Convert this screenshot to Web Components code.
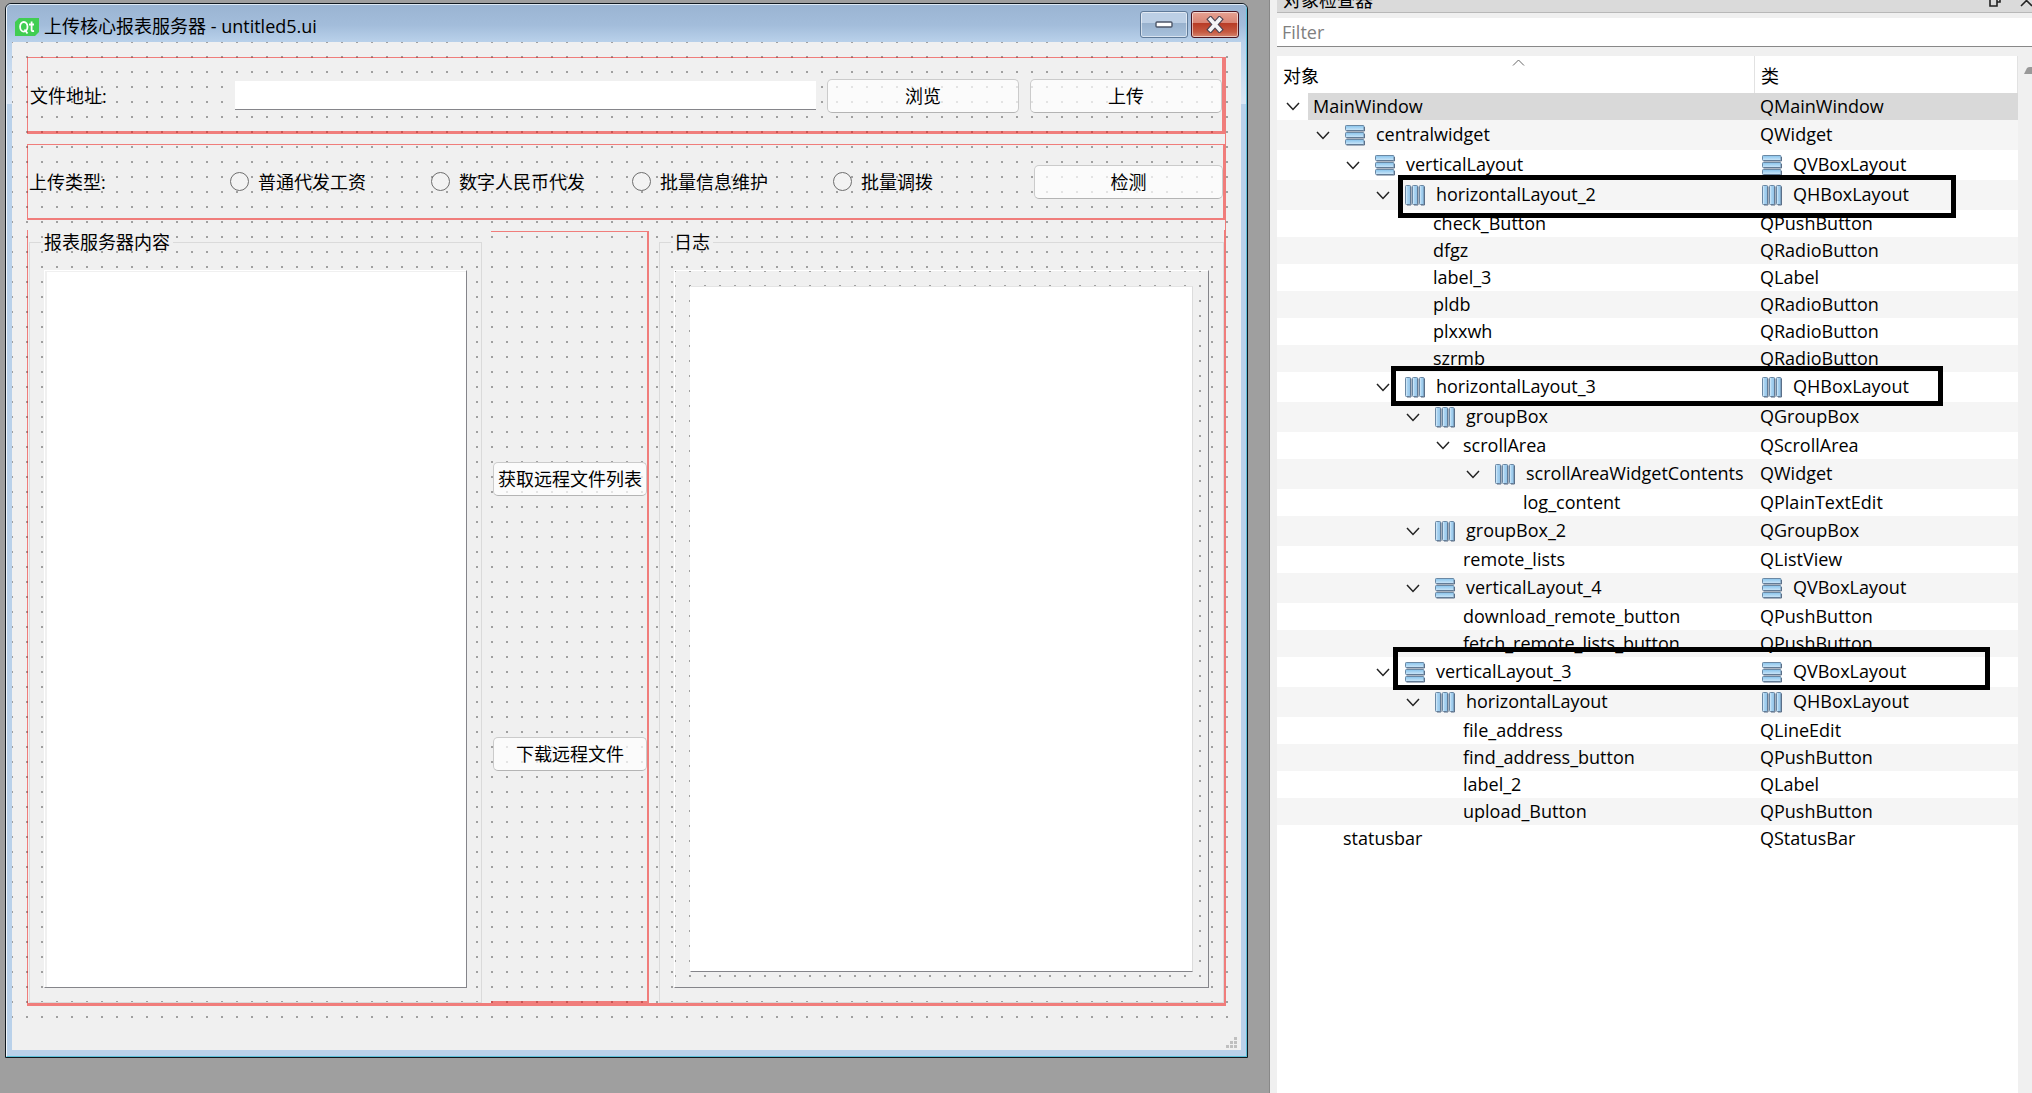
<!DOCTYPE html>
<html lang="zh-CN">
<head>
<meta charset="utf-8">
<title>Qt Designer</title>
<style>
html, body { margin: 0; height: 100%; }
body {
  font-family: "Open Sans", "Noto Sans CJK SC", sans-serif;
  font-size: 18px; line-height: 24px; color: #000;
  --red: rgba(240, 10, 5, .5);
  background: #9f9f9f; overflow: hidden;
}
</style>
</head>
<body>
<designer-app></designer-app>
<script>
const define = (name, html, setup) => {
  const tpl = document.createElement('template');
  tpl.innerHTML = html;
  customElements.define(name, class extends HTMLElement {
    constructor() {
      super();
      this.attachShadow({ mode: 'open' }).append(tpl.content.cloneNode(true));
    }
    connectedCallback() { if (setup) setup(this, this.shadowRoot); }
  });
};

define('qt-button', `
<style>
:host { display: block; min-width: 0; }
button { box-sizing: border-box; width: 100%; height: 34px; padding: 0; font: inherit; color: inherit; white-space: nowrap;
  border: 1px solid #cbcbcb; border-bottom-color: #b4b4b4; border-radius: 5px; background: rgba(255,255,255,.7); }
</style>
<button type="button"><slot></slot></button>`);

define('qt-radio', `
<style>
:host { display: block; }
label { display: flex; align-items: center; gap: 9px; white-space: nowrap; }
input { appearance: none; flex: none; box-sizing: border-box; width: 19px; height: 19px; margin: 0;
  border: 1px solid #6e6e6e; border-radius: 50%; background: #f3f3f3; }
input:checked { border: 6px solid #0067c0; background: #fff; }
</style>
<label><input type="radio" name="kind"><span><slot></slot></span></label>`);

define('group-box', `
<style>
:host { display: flex; min-width: 0; }
fieldset { flex: 1; min-width: 0; box-sizing: border-box; height: 100%; margin: 0; padding: 16px 14px 14px; border: 1px solid #dadada; }
legend { margin-left: -3px; padding: 0 3px; height: 24px; }
</style>
<fieldset><legend></legend><slot></slot></fieldset>`,
(host, root) => { root.querySelector('legend').textContent = host.getAttribute('heading'); });

define('list-view', `
<style>
:host { display: block; box-sizing: border-box; height: 100%; background: #fff; border: 1px solid;
  border-color: #fff #85858a #85858a #fff; box-shadow: inset 2px 1px 0 #f0f0f0; }
</style><slot></slot>`);

define('scroll-area', `
<style>
:host { display: block; box-sizing: border-box; height: 100%; padding: 15px; border: 1px solid;
  border-color: #fff #85858a #85858a #fff;
  background: conic-gradient(from 0deg at 2px 2px, transparent 0 270deg, #a0a0a0 0) -1px -1px / 15px 15px #f0f0f0; }
textarea { display: block; box-sizing: border-box; width: 100%; height: 100%; margin: 0; padding: 4px; resize: none; font: inherit;
  outline: 0; background: #fff; border: 1px solid; border-color: #e4e4e4 #dcdcdc #85858a #fff; border-radius: 0; }
</style>
<textarea aria-label="log_content"></textarea>`);

define('title-bar', `
<style>
:host { display: flex; align-items: center; height: 37px; padding: 0 7px 0 8px; box-sizing: border-box;
  background: linear-gradient(#9ab4d2, #a3bddb 55%, #b9d1ea); }
svg { display: block; }
.logo { flex: none; margin: 7px 5px 0 0; }
h1 { flex: 1; margin: 0; padding-top: 4px; font-weight: 400; font-size: 18px; line-height: 24px; white-space: nowrap; }
button { flex: none; width: 48px; height: 27px; margin: 2px 0 0 3px; padding: 0; display: grid; place-items: center;
  border: 1px solid #5f7a99; border-radius: 3px; box-shadow: inset 0 0 0 1px rgba(255,255,255,.55);
  background: linear-gradient(#bccfe5 0 45%, #98b1cd 45%, #a9c2dd); }
.close { border-color: #4a1420; background: linear-gradient(#e6a293, #d98473 45%, #b83b25 45%, #c65a42 80%, #d58570); }
</style>
<svg class="logo" width="24" height="18" viewBox="0 0 24 18" aria-hidden="true"><path d="M4 0H24V14L20 18H0V4Z" fill="#41cd52"/><g fill="none" stroke="#fff" stroke-width="1.8"><ellipse cx="8.8" cy="8.8" rx="3.7" ry="4.8"/><path d="M9.5 11.5L12.5 15.5M16.6 3.5V12Q16.6 13.5 19 13M14 6.5H19"/></g></svg>
<h1><slot></slot></h1>
<button type="button" aria-label="最小化"><svg width="18" height="7"><rect x="1" y="1" width="16" height="5" rx="1" fill="#fff" stroke="#4c5668" stroke-width="1.4"/></svg></button>
<button type="button" class="close" aria-label="关闭"><svg width="18" height="17" viewBox="0 0 18 17"><path d="M4.500 3.500L13.500 13.500M13.500 3.500L4.500 13.500" stroke="#4a4452" stroke-width="6" stroke-linecap="square"/><path d="M4.500 3.500L13.500 13.500M13.500 3.500L4.500 13.500" stroke="#f4f4f6" stroke-width="3.800" stroke-linecap="square"/></svg></button>`);

define('form-canvas', `
<style>
:host { flex: 1; min-height: 0; display: flex; padding: 15px 15px 14px;
  background: conic-gradient(from 0deg at 2px 2px, transparent 0 270deg, #a0a0a0 0) -1px -1px / 15px 15px #f0f0f0; }
main { flex: 1; min-width: 0; display: flex; flex-direction: column; gap: 10px; border-right: 1px solid var(--red); }
section { box-sizing: border-box; border: 1px solid var(--red); display: grid; align-items: center; }
.file { height: 77px; grid-template-columns: 194fr 581fr 192fr 192fr; column-gap: 11px; border-width: 1px 3px 3px 1px; padding: 2px 0 0 2px; }
.kind { height: 76px; grid-template-columns: repeat(5, 1fr) 189px; border-width: 1px 2px 2px 1px; padding-left: 1px; }
.work { flex: 1; min-height: 0; grid-template-columns: 462fr 158px 575fr; grid-template-rows: 100%; align-items: stretch; border-width: 0 1px 3px 1px; padding-left: 1px; }
.file input { box-sizing: border-box; width: 100%; height: 29px; margin: 0; padding: 0 4px; font: inherit; border: 0; border-bottom: 1px solid #85858a; background: #fff; outline: 0; }
.tools { box-sizing: border-box; margin-top: 1px; padding-left: 2px; display: flex; flex-direction: column; justify-content: center; gap: 241px;
  border: solid var(--red); border-width: 1px 2px 2px 0; }
.left { margin-right: 9px; } .right { margin-left: 10px; }
</style>
<main>
  <section class="file">
    <label for="path">文件地址:</label><input id="path" type="text">
    <qt-button>浏览</qt-button><qt-button>上传</qt-button>
  </section>
  <section class="kind">
    <span>上传类型:</span>
    <qt-radio>普通代发工资</qt-radio><qt-radio>数字人民币代发</qt-radio><qt-radio>批量信息维护</qt-radio><qt-radio>批量调拨</qt-radio>
    <qt-button>检测</qt-button>
  </section>
  <section class="work">
    <group-box class="left" heading="报表服务器内容"><list-view></list-view></group-box>
    <div class="tools"><qt-button>获取远程文件列表</qt-button><qt-button>下载远程文件</qt-button></div>
    <group-box class="right" heading="日志"><scroll-area></scroll-area></group-box>
  </section>
</main>`);

define('designer-window', `
<style>
:host { display: flex; flex-direction: column; box-sizing: border-box; border: 1px solid #10181f; border-radius: 6px 6px 0 0; background: #b9d1ea; overflow: hidden; }
.frame { flex: 1; min-height: 0; display: flex; flex-direction: column; border: 1px solid; border-color: #dfeaf5 #5cc0d8 #5cc0d8 #f2f7fc; border-radius: 5px 5px 0 0; overflow: hidden;
  background: linear-gradient(#b9d1ea 37px, #dbe7f5 99px, #b9d1ea 99px); }
.client { flex: 1; min-height: 0; display: flex; flex-direction: column; margin: 0 5px 6px; }
footer { height: 30px; background: #f0f0f0; display: flex; align-items: flex-end; justify-content: flex-end; }
footer svg { margin: 0 4px 2px 0; }
title-bar { flex: none; }
</style>
<div class="frame">
  <title-bar><slot name="title"></slot></title-bar>
  <div class="client">
    <form-canvas></form-canvas>
    <footer><svg width="11" height="11" fill="#bfbfbf" aria-hidden="true"><path d="M8 0h3v3H8zM4 4h3v3H4zM8 4h3v3H8zM0 8h3v3H0zM4 8h3v3H4zM8 8h3v3H8z"/></svg></footer>
  </div>
</div>`);

define('layout-icon', `
<style>:host { display: block; flex: none; width: 20px; height: 21px; } :host([kind="h"]) .v, :host([kind="v"]) .h { display: none; } svg { display: block; }</style>
<svg width="20" height="21" viewBox="0 0 20 21" aria-hidden="true">
  <defs><linearGradient id="g" x2="1"><stop offset="0" stop-color="#eaf5fd"/><stop offset=".4" stop-color="#a9d3f1"/><stop offset="1" stop-color="#8fc1e6"/></linearGradient>
  <linearGradient id="k" x2="0" y2="1"><stop offset="0" stop-color="#86c3ec"/><stop offset="1" stop-color="#cfe7f8"/></linearGradient></defs>
  <g class="v" stroke="#6a88a4" fill="url(#k)"><rect x=".5" y=".5" width="18.500" height="5" rx=".8"/><rect x=".5" y="7.500" width="18.500" height="5" rx=".8"/><rect x=".5" y="14.500" width="18.500" height="5" rx=".8"/><path d="M1.500 6H19.500V2M1.500 13H19.500V9M1.500 20H19.500V16" fill="none" stroke="#5b6f88"/></g>
  <g class="h" stroke="#6a88a4" fill="url(#g)"><rect x=".5" y=".5" width="5" height="19" rx=".8"/><rect x="7.500" y=".5" width="5" height="19" rx=".8"/><rect x="14.500" y=".5" width="4.500" height="19" rx=".8"/><path d="M6 1.500V20H2M13 1.500V20H9M19.500 1.500V20H16" fill="none" stroke="#5b6f88"/></g>
</svg>`);

const rows = [
  [0, 'MainWindow', 'QMainWindow', 1], [1, 'centralwidget', 'QWidget', 1, 'v'], [2, 'verticalLayout', 'QVBoxLayout', 1, 'v', 'v'],
  [3, 'horizontalLayout_2', 'QHBoxLayout', 1, 'h', 'h'], [4, 'check_Button', 'QPushButton'], [4, 'dfgz', 'QRadioButton'],
  [4, 'label_3', 'QLabel'], [4, 'pldb', 'QRadioButton'], [4, 'plxxwh', 'QRadioButton'], [4, 'szrmb', 'QRadioButton'],
  [3, 'horizontalLayout_3', 'QHBoxLayout', 1, 'h', 'h'], [4, 'groupBox', 'QGroupBox', 1, 'h'], [5, 'scrollArea', 'QScrollArea', 1],
  [6, 'scrollAreaWidgetContents', 'QWidget', 1, 'h'], [7, 'log_content', 'QPlainTextEdit'], [4, 'groupBox_2', 'QGroupBox', 1, 'h'],
  [5, 'remote_lists', 'QListView'], [4, 'verticalLayout_4', 'QVBoxLayout', 1, 'v', 'v'], [5, 'download_remote_button', 'QPushButton'],
  [5, 'fetch_remote_lists_button', 'QPushButton'], [3, 'verticalLayout_3', 'QVBoxLayout', 1, 'v', 'v'],
  [4, 'horizontalLayout', 'QHBoxLayout', 1, 'h', 'h'], [5, 'file_address', 'QLineEdit'], [5, 'find_address_button', 'QPushButton'],
  [5, 'label_2', 'QLabel'], [5, 'upload_Button', 'QPushButton'], [1, 'statusbar', 'QStatusBar']
];

define('object-tree', `
<style>
:host { display: block; position: relative; flex: 1; min-width: 0; background: #fff; }
table { width: 100%; border-collapse: collapse; table-layout: fixed; }
th, td { padding: 0; text-align: left; font-weight: 400; }
th { height: 37px; vertical-align: top; }
th div { box-sizing: border-box; height: 37px; padding: 8px 0 0 6px; border-right: 1px solid #e2e2e2; }
th svg { display: block; margin: -5px auto -2px; }
col.name { width: 478px; }
tbody tr { height: 27px; } tbody tr.tall { height: 30px; }
tbody tr:nth-child(even) { background: #f5f5f5; }
td > div { display: flex; align-items: stretch; height: 27px; line-height: 24px; } .tall td > div { height: 30px; }
.pad { flex: none; width: calc(var(--d) * 30px); }
button { flex: none; width: 31px; padding: 0; border: 0; background: none; display: grid; place-items: center; }
i { flex: none; width: 31px; }
.cell { flex: 1; display: flex; align-items: center; padding-left: 5px; white-space: nowrap; }
.cell span { padding-bottom: 2px; }
.cell.icon { padding-left: 7px; gap: 11px; }
.sel .cell { background: #d9d9d9; }
.mark { position: absolute; box-sizing: border-box; border: 5px solid #000; pointer-events: none; }
</style>
<table>
  <colgroup><col class="name"><col></colgroup>
  <thead><tr><th scope="col"><div class="sort">对象</div></th><th scope="col"><div>类</div></th></tr></thead>
  <tbody></tbody>
</table>
<div class="mark" style="left:121px;top:119px;width:558px;height:43px"></div>
<div class="mark" style="left:114px;top:310px;width:552px;height:40px"></div>
<div class="mark" style="left:116px;top:591px;width:597px;height:43px"></div>`,
(host, root) => {
  const cell = (text, icon) => `<div class="cell${icon ? ' icon' : ''}">${icon ? `<layout-icon kind="${icon}"></layout-icon>` : ''}<span>${text}</span></div>`;
  root.querySelector('tbody').innerHTML = rows.map(([d, name, cls, open, a, b], n) => `
    <tr class="${a ? 'tall' : ''}${n ? '' : ' sel'}"><td><div><span class="pad" style="--d:${d}"></span>${open
      ? `<button type="button" aria-label="折叠 ${name}"><svg width="14" height="9" viewBox="0 0 14 9" fill="none" stroke="#222" stroke-width="1.500"><path d="M1 1L7 7.500L13 1"/></svg></button>` : '<i></i>'}${cell(name, a)}</div></td><td><div>${cell(cls, b)}</div></td></tr>`).join('');
  root.querySelector('.sort').insertAdjacentHTML('afterbegin', '<svg width="13" height="7" viewBox="0 0 13 7" fill="none" stroke="#666"><path d="M1 6.500L6.500 1L12 6.500"/></svg>');
});

define('object-inspector', `
<style>
:host { display: flex; flex-direction: column; min-width: 0; box-sizing: border-box; padding-left: 7px; border-left: 1px solid #888; background: #f0f0f0; overflow: hidden; }
header { flex: none; box-sizing: border-box; height: 13px; display: flex; align-items: flex-end; justify-content: space-between; overflow: hidden; padding-left: 6px; background: #dadada; border-bottom: 1px solid #b8b8b8; }
h2 { margin: 0; font-size: 18px; font-weight: 400; line-height: 24px; }
header svg { margin-bottom: 5px; }
input { flex: none; box-sizing: border-box; width: 100%; height: 29px; margin: 5px 0 9px; padding: 0 5px; font: inherit; border: 0; border-bottom: 1px solid #888; border-radius: 0; background: #fff; outline: 0; }
input::placeholder { color: #808080; opacity: 1; }
.view { flex: 1; min-height: 0; display: flex; }
aside { flex: none; width: 14px; overflow: hidden; padding-left: 6px; box-sizing: border-box; padding-top: 11px; }
aside svg { display: block; }
</style>
<header><h2>对象检查器</h2><svg width="45" height="12" viewBox="0 0 45 12" fill="none" stroke="#222" stroke-width="1.600" aria-hidden="true"><path d="M3 4H10V11H3ZM6 4V1H13V7H10M34 0L45 11M45 0L34 11"/></svg></header>
<input type="text" placeholder="Filter" aria-label="Filter">
<div class="view"><object-tree></object-tree><aside><svg width="14" height="8" aria-hidden="true"><path d="M0 7L3 1Q4 0 6 0H14V7Z" fill="#999"/></svg></aside></div>`);

define('designer-app', `
<style>
:host { display: grid; grid-template-columns: 1269fr 763fr; height: 100vh; }
.desk { display: flex; min-width: 0; padding: 3px 21px 35px 5px; }
designer-window { flex: 1; min-width: 0; }
</style>
<div class="desk"><designer-window><span slot="title">上传核心报表服务器 - untitled5.ui</span></designer-window></div>
<object-inspector></object-inspector>`);
</script>
</body>
</html>
